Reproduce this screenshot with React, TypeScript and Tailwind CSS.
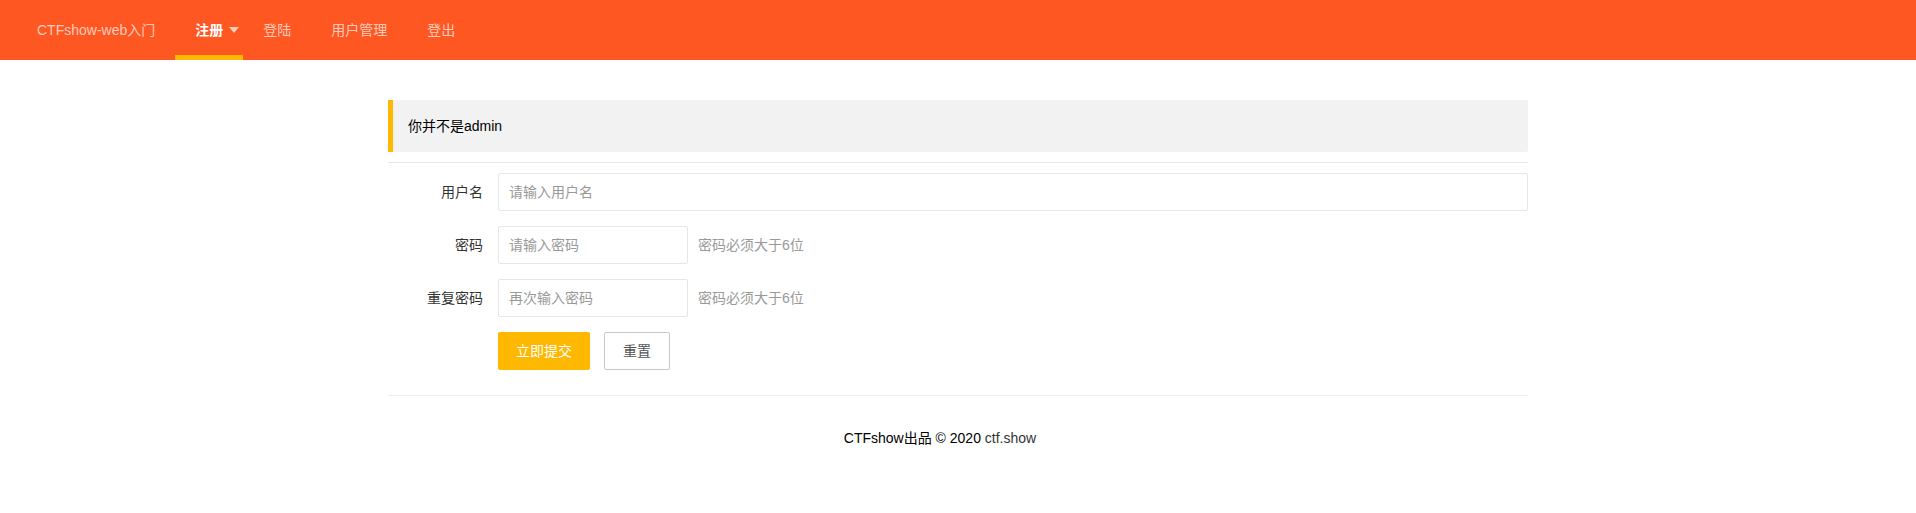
const font = { fontFamily: '"Liberation Sans", "Noto Sans CJK SC", sans-serif' };

const NavItem = ({ label, active, more }: { label: string; active?: boolean; more?: boolean }) => {
  return (
    <li className="relative h-[60px] flex items-center">
      <a
        className={`flex items-center h-[60px] pl-5 ${more ? "pr-1" : "pr-5"} ${
          active ? "text-white font-bold" : "text-white/70"
        }`}
      >
        {label}
        {more && (
          <span className="ml-[6px] w-0 h-0 border-l-[5px] border-r-[5px] border-t-[6px] border-l-transparent border-r-transparent border-t-white/70" />
        )}
      </a>
      {active && <span className="absolute left-0 right-0 bottom-0 h-[5px] bg-[#FFB800]" />}
    </li>
  );
};

const FormRow = ({ children }: { children: React.ReactNode }) => (
  <div className="flex items-start mb-[15px]">{children}</div>
);

const Label = ({ text }: { text: string }) => (
  <label className="w-[110px] shrink-0 px-[15px] py-[9px] leading-5 text-right text-[#333]">{text}</label>
);

const App = () => {
  return (
    <div className="min-h-[513px] bg-white text-sm text-[#333]" style={font}>
      {/* Header */}
      <div className="h-[60px] bg-[#FF5722]">
        <ul className="flex h-[60px] pl-[17px]">
          <NavItem label="CTFshow-web入门" />
          <NavItem label="注册" active more />
          <NavItem label="登陆" />
          <NavItem label="用户管理" />
          <NavItem label="登出" />
        </ul>
      </div>

      {/* Main */}
      <div className="w-[1140px] mx-auto pt-10">
        <blockquote className="border-l-[5px] border-[#FFB800] bg-[#f2f2f2] rounded-r-[2px] p-[15px] leading-[22px] text-black">
          你并不是admin
        </blockquote>
        <hr className="my-[10px] border-0 border-b border-[#e6e6e6]" />

        <form>
          <FormRow>
            <Label text="用户名" />
            <input
              className="flex-1 h-[38px] border border-[#e6e6e6] rounded-[2px] pl-[10px] outline-none placeholder:text-[#999]"
              placeholder="请输入用户名"
            />
          </FormRow>
          <FormRow>
            <Label text="密码" />
            <input
              type="password"
              className="w-[190px] h-[38px] border border-[#e6e6e6] rounded-[2px] pl-[10px] outline-none placeholder:text-[#999]"
              placeholder="请输入密码"
            />
            <div className="ml-[10px] py-[9px] leading-5 text-[#999]">密码必须大于6位</div>
          </FormRow>
          <FormRow>
            <Label text="重复密码" />
            <input
              type="password"
              className="w-[190px] h-[38px] border border-[#e6e6e6] rounded-[2px] pl-[10px] outline-none placeholder:text-[#999]"
              placeholder="再次输入密码"
            />
            <div className="ml-[10px] py-[9px] leading-5 text-[#999]">密码必须大于6位</div>
          </FormRow>
          <FormRow>
            <div className="w-[110px] shrink-0" />
            <button
              type="button"
              className="h-[38px] px-[18px] bg-[#FFB800] text-white rounded-[2px]"
            >
              立即提交
            </button>
            <button
              type="button"
              className="ml-[14px] h-[38px] px-[18px] bg-white text-[#555] border border-[#C9C9C9] rounded-[2px]"
            >
              重置
            </button>
          </FormRow>
        </form>

        <hr className="mt-[25px] mb-[10px] border-0 border-b border-[#eee]" />

        <div className="pt-[22px] text-center leading-5 text-black pr-[36px]">
          CTFshow出品 © 2020 <a className="text-[#333]">ctf.show</a>
        </div>
      </div>
    </div>
  );
};

export default App;
